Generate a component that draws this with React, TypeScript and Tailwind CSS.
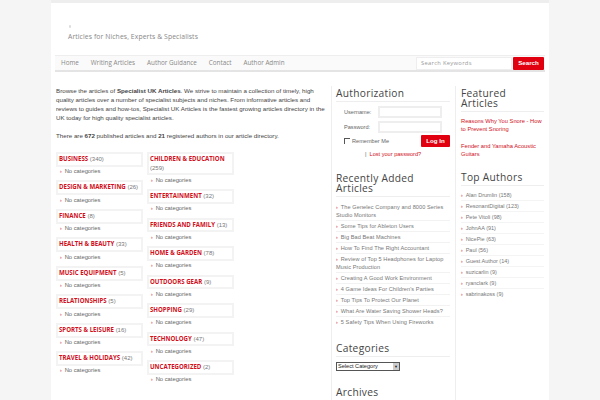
const left: [string, string][] = [
  ["BUSINESS", "(340)"],
  ["DESIGN & MARKETING", "(26)"],
  ["FINANCE", "(8)"],
  ["HEALTH & BEAUTY", "(33)"],
  ["MUSIC EQUIPMENT", "(5)"],
  ["RELATIONSHIPS", "(5)"],
  ["SPORTS & LEISURE", "(16)"],
  ["TRAVEL & HOLIDAYS", "(42)"],
];
const right: [string, string][] = [
  ["CHILDREN & EDUCATION", "(259)"],
  ["ENTERTAINMENT", "(32)"],
  ["FRIENDS AND FAMILY", "(13)"],
  ["HOME & GARDEN", "(78)"],
  ["OUTDOORS GEAR", "(9)"],
  ["SHOPPING", "(29)"],
  ["TECHNOLOGY", "(47)"],
  ["UNCATEGORIZED", "(2)"],
];
const recent = [
  "The Genelec Company and 8000 Series Studio Monitors",
  "Some Tips for Ableton Users",
  "Big Bad Beat Machines",
  "How To Find The Right Accountant",
  "Review of Top 5 Headphones for Laptop Music Production",
  "Creating A Good Work Environment",
  "4 Game Ideas For Children's Parties",
  "Top Tips To Protect Our Planet",
  "What Are Water Saving Shower Heads?",
  "5 Safety Tips When Using Fireworks",
];
const authors = [
  "Alan Drumlin (158)",
  "ResonantDigital (123)",
  "Pete Vitoli (98)",
  "JohnAA (91)",
  "NicePie (63)",
  "Paul (56)",
  "Guest Author (14)",
  "suzicarlin (9)",
  "ryanclark (9)",
  "sabrinakoss (9)",
];

function Cat({ name, count }: { name: string; count: string }) {
  return (
    <div className="mb-[3.9px]">
      <div className="border-2 border-[#f3f3f3] px-[1px] py-[1px] text-[6px] leading-[8.6px] text-[#777]">
        <span className="font-bold text-[#d0101c] text-[6.1px] leading-[6px] font-['Open_Sans']">{name}</span> {count}
      </div>
      <div className="flex items-center h-[10px] pl-[4px] text-[5.8px] text-[#666] gap-[3px]">
        <span className="text-[#d0101c] text-[5px]">›</span>No categories
      </div>
    </div>
  );
}

function Heading({ children }: { children: React.ReactNode }) {
  return (
    <h3 className="font-['Open_Sans'] text-[10.2px] leading-[10px] tracking-[0.3px] text-[#444] pb-[3px] border-b border-[#eee]">
      {children}
    </h3>
  );
}

export default function App() {
  return (
    <div className="w-[600px] h-[400px] overflow-hidden bg-[#f5f5f5] font-['Liberation_Sans',sans-serif]">
      <div className="ml-[51px] w-[498px] h-[400px] bg-white border-t-[3px] border-[#eeeeee] flex flex-col">
        <header className="h-[52px] pl-[17px] pt-[22px]">
          <div className="ml-[1px] w-[2px] h-[3px] bg-[#ddd] rounded-full" />
          <div className="mt-[4px] font-['Open_Sans'] text-[6.8px] leading-[9px] tracking-[0.1px] text-[#888]">
            Articles for Niches, Experts &amp; Specialists
          </div>
        </header>
        <nav className="mx-[4px] h-[17px] bg-[#fafafa] border-t border-[#eee] border-b-2 border-b-[#e4e4e4] flex items-center font-['Open_Sans'] text-[6.3px] text-[#888] pl-[6px] pr-[1px]">
          <div className="flex gap-[12px] flex-1">
            <span>Home</span>
            <span>Writing Articles</span>
            <span>Author Guidance</span>
            <span>Contact</span>
            <span>Author Admin</span>
          </div>
          <div className="w-[96px] h-[13px] bg-white border border-[#eee] pl-[4px] flex items-center text-[5.8px] tracking-[0.3px] text-[#999]">
            Search Keywords
          </div>
          <button className="ml-[1px] w-[31px] h-[13px] bg-[#e0000f] text-white font-bold rounded-[1px] text-[6.2px] font-['Liberation_Sans']">
            Search
          </button>
        </nav>
        <main className="flex flex-1 pt-[14px] pl-[5px] min-h-0 overflow-hidden">
          <section className="w-[275px] shrink-0 text-[6.2px] leading-[9px] text-[#444] pr-[5px]">
            <p>
              Browse the articles of <b>Specialist UK Articles</b>. We strive to maintain a collection of timely, high quality articles over a number of specialist subjects and niches. From informative articles and reviews to guides and how-tos, Specialist UK Articles is the fastest growing articles directory in the UK today for high quality specialist articles.
            </p>
            <p className="mt-[9px]">
              There are <b>672</b> published articles and <b>21</b> registered authors in our article directory.
            </p>
            <div className="flex gap-[4px] mt-[12px]">
              <div className="w-[87px]">
                {left.map(([n, c]) => <Cat key={n} name={n} count={c} />)}
              </div>
              <div className="w-[87px]">
                {right.map(([n, c]) => <Cat key={n} name={n} count={c} />)}
              </div>
            </div>
          </section>
          <aside className="w-[124px] shrink-0 border-l border-[#eee] pl-[4px] pr-[5px] pt-[2px] text-[#666]">
            <Heading>Authorization</Heading>
            <div className="pl-[8px] text-[5.6px]">
              <div className="flex items-center mt-[4px]">
                <span className="w-[34px]">Username:</span>
                <div className="w-[64px] h-[12px] border-2 border-[#eee] bg-white" />
              </div>
              <div className="flex items-center mt-[3px]">
                <span className="w-[34px]">Password:</span>
                <div className="w-[64px] h-[12px] border-2 border-[#eee] bg-white" />
              </div>
              <div className="flex items-center mt-[2px]">
                <span className="w-[6px] h-[6px] border-l border-t border-[#555] mr-[2px]" />
                <span>Remember Me</span>
                <button className="ml-auto w-[29px] h-[12px] bg-[#e0000f] text-white font-bold rounded-[1px] text-[6.2px]">Log In</button>
              </div>
              <div className="mt-[2px] pl-[21px] leading-[10px]">
                |&nbsp; <span className="text-[#d0101c]">Lost your password?</span>
              </div>
            </div>
            <div className="mt-[14px]">
              <Heading>Recently Added Articles</Heading>
            </div>
            <ul className="mt-[5px] text-[5.6px] leading-[8px] tracking-[0.08px] text-[#777]">
              {recent.map((r) => (
                <li key={r} className="py-[1px] border-b border-[#f2f2f2] last:border-0">
                  <span className="text-[#d0101c] text-[5px] mr-[3px]">›</span>{r}
                </li>
              ))}
            </ul>
            <div className="mt-[16px]">
              <Heading>Categories</Heading>
            </div>
            <div className="mt-[5px] w-[64px] h-[9px] border border-[#555] bg-white flex items-center justify-between text-[5.6px] leading-none text-[#222] pl-[1px]">
              Select Category<span className="w-[6px] h-[7px] bg-[#ccc] text-[4px] leading-[7px] text-center">▼</span>
            </div>
            <div className="mt-[16px]">
              <Heading>Archives</Heading>
            </div>
          </aside>
          <aside className="w-[92px] shrink-0 border-l border-[#eee] pl-[5px] pt-[2px] pr-[3px]">
            <Heading>Featured Articles</Heading>
            <div className="mt-[5px] leading-[8px] text-[#d0101c] text-[5.75px]">
              <p>Reasons Why You Snore - How to Prevent Snoring</p>
              <p className="mt-[9px]">Fender and Yamaha Acoustic Guitars</p>
            </div>
            <div className="mt-[14px]">
              <Heading>Top Authors</Heading>
            </div>
            <ul className="mt-[4px] text-[#777] text-[5.5px]">
              {authors.map((a) => (
                <li key={a} className="h-[11px] leading-[10px] border-b border-[#f4f4f4] last:border-0">
                  <span className="text-[#d0101c] text-[5px] mr-[3px]">›</span>{a}
                </li>
              ))}
            </ul>
          </aside>
        </main>
      </div>
    </div>
  );
}
